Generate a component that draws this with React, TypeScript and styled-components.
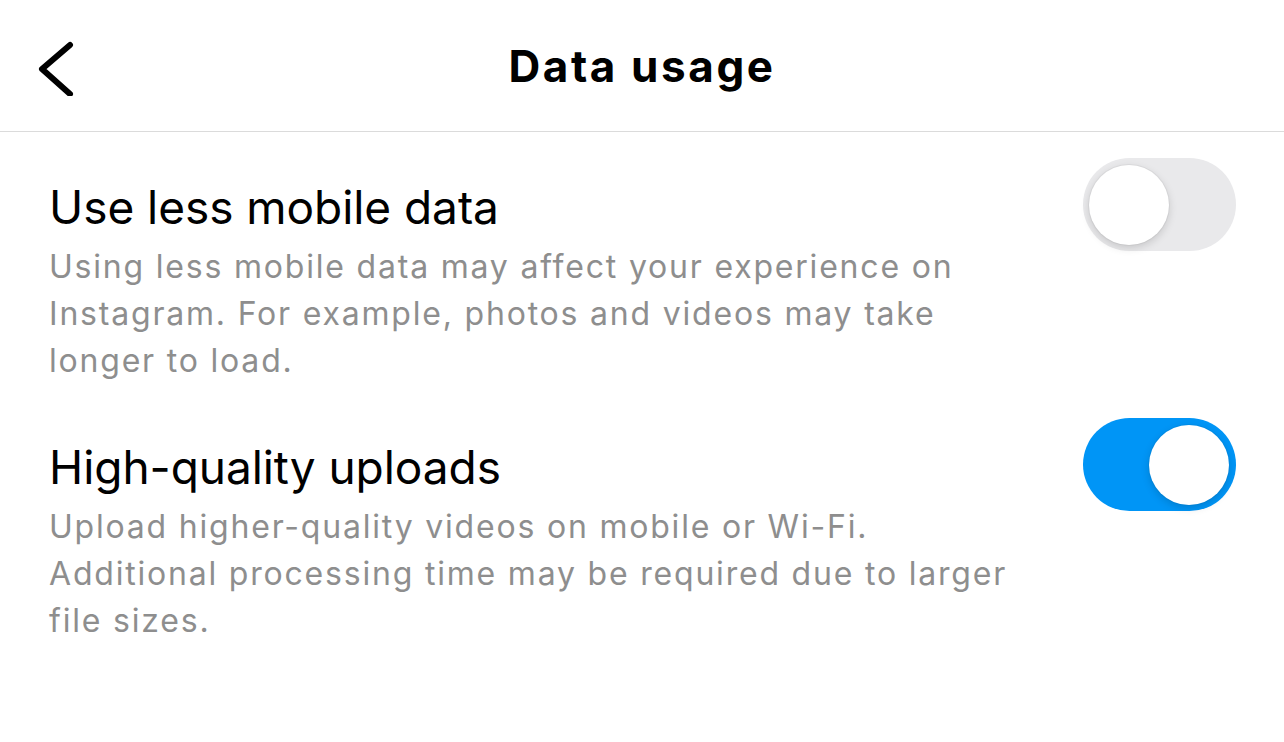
import styled, { createGlobalStyle } from 'styled-components';
import { useState } from 'react';

const GlobalStyle = createGlobalStyle`
  html, body {
    margin: 0;
    padding: 0;
    background: #ffffff;
  }
  body {
    font-family: Inter, "Noto Sans", "DejaVu Sans", sans-serif;
    -webkit-font-smoothing: antialiased;
  }
`;

const Page = styled.div`
  width: 1284px;
  height: 742px;
  background: #fff;
  display: flex;
  flex-direction: column;
`;

const Header = styled.header`
  height: 131px;
  border-bottom: 1px solid #dbdbdb;
  display: grid;
  grid-template-columns: 120px 1fr 120px;
  align-items: center;
  box-sizing: content-box;
`;

const BackButton = styled.button`
  border: none;
  background: none;
  padding: 0 0 0 38px;
  display: flex;
  align-items: center;
  cursor: pointer;
  height: 100%;
`;

const Title = styled.h1`
  margin: 0;
  text-align: center;
  font-size: 44px;
  font-weight: 700;
  color: #000;
  letter-spacing: 2.6px;
`;

const List = styled.div`
  display: flex;
  flex-direction: column;
  gap: 57px;
  padding: 49px 48px 0 49px;
`;

const Row = styled.div`
  display: flex;
  align-items: flex-start;
  justify-content: space-between;
`;

const TextBlock = styled.div`
  display: flex;
  flex-direction: column;
  gap: 10px;
  width: 990px;
`;

const RowTitle = styled.div`
  font-size: 46px;
  line-height: 52px;
  color: #000;
  font-weight: 400;
  letter-spacing: -0.05px;
`;

const RowDesc = styled.div`
  font-size: 32px;
  line-height: 47px;
  color: #8e8e8e;
  font-weight: 400;
  letter-spacing: 1.8px;
  white-space: nowrap;
`;

const Track = styled.button<{ $on: boolean }>`
  position: relative;
  flex: none;
  width: 153px;
  height: 93px;
  margin-top: -23px;
  border-radius: 47px;
  border: none;
  padding: 0;
  cursor: pointer;
  background: ${({ $on }) => ($on ? '#0095f6' : '#e9e9eb')};
  transition: background 0.2s;
`;

const Thumb = styled.span<{ $on: boolean }>`
  position: absolute;
  top: 7px;
  left: ${({ $on }) => ($on ? '66px' : '6px')};
  width: 80px;
  height: 80px;
  border-radius: 50%;
  background: #fff;
  box-shadow: 0 3px 8px rgba(0, 0, 0, 0.15), 0 0 0 1px rgba(0, 0, 0, 0.04);
  transition: left 0.2s;
`;

function Toggle({ on, onChange }: { on: boolean; onChange: () => void }) {
  return (
    <Track $on={on} onClick={onChange} aria-pressed={on}>
      <Thumb $on={on} />
    </Track>
  );
}

export default function App() {
  const [lessData, setLessData] = useState(false);
  const [highQuality, setHighQuality] = useState(true);

  return (
    <Page>
      <GlobalStyle />
      <Header>
        <BackButton aria-label="Back">
          <svg width="40" height="60" viewBox="0 0 40 60">
            <path d="M32 9 L4 33 L32 58" fill="none" stroke="#000" strokeWidth="6" strokeLinecap="round" strokeLinejoin="round" />
          </svg>
        </BackButton>
        <Title>Data usage</Title>
        <div />
      </Header>
      <List>
        <Row>
          <TextBlock>
            <RowTitle>Use less mobile data</RowTitle>
            <RowDesc>
              Using less mobile data may affect your experience on
              <br />
              Instagram. For example, photos and videos may take
              <br />
              longer to load.
            </RowDesc>
          </TextBlock>
          <Toggle on={lessData} onChange={() => setLessData(!lessData)} />
        </Row>
        <Row>
          <TextBlock>
            <RowTitle>High-quality uploads</RowTitle>
            <RowDesc>
              Upload higher-quality videos on mobile or Wi-Fi.
              <br />
              Additional processing time may be required due to larger
              <br />
              file sizes.
            </RowDesc>
          </TextBlock>
          <Toggle on={highQuality} onChange={() => setHighQuality(!highQuality)} />
        </Row>
      </List>
    </Page>
  );
}
